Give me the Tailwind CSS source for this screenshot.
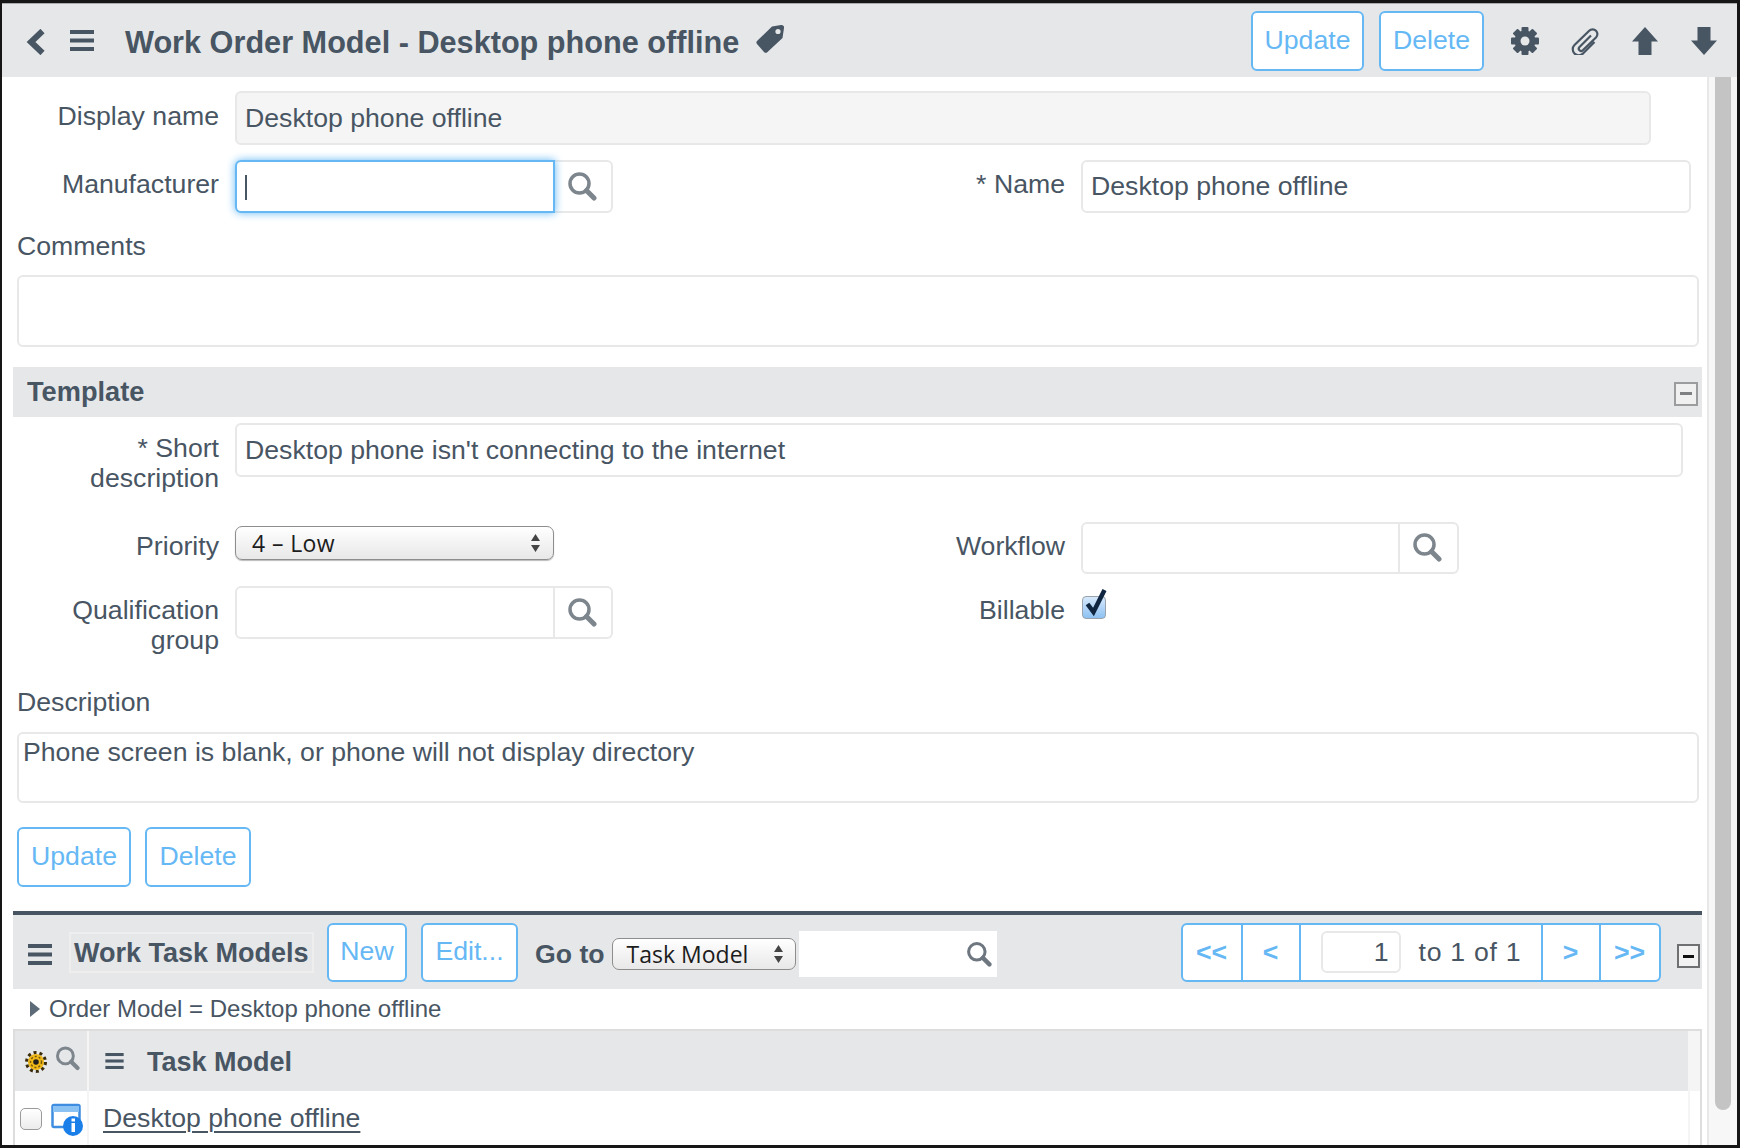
<!DOCTYPE html>
<html lang="en">
  <head>
    <meta charset="UTF-8" />
    <title>Work Order Model - Desktop phone offline</title>
    <script src="https://cdn.jsdelivr.net/npm/@tailwindcss/browser@4"></script>
  </head>
  <body class="bg-[#161616]">
    <svg class="hidden">
      <symbol id="search" viewBox="0 0 30 30">
        <circle cx="12.5" cy="12.5" r="9.5" fill="none" stroke="currentColor" stroke-width="3.5" />
        <path d="M19.5 19.5L27 27" fill="none" stroke="currentColor" stroke-width="5" stroke-linecap="round" />
      </symbol>
      <symbol id="menu" viewBox="0 0 24 21">
        <rect width="24" height="4" />
        <rect y="8.5" width="24" height="4" />
        <rect y="17" width="24" height="4" />
      </symbol>
    </svg>

    <div class="w-[1740px] h-[1148px] overflow-hidden pt-[3px] pl-[2px] pr-[3px] pb-[3px] font-['Liberation_Sans',Arial,sans-serif] text-[26.67px] leading-[30px] text-[#485563]">
      <div class="w-full h-full bg-white flex flex-col">
        <!-- Title bar -->
        <header class="h-[74px] shrink-0 bg-[#e6e7e9] border-t border-[#a9abad] flex items-center pl-[24px] pr-[20px]">
          <svg class="w-[20px] h-[26px] mt-[3px]" viewBox="0 0 20 26"><path d="M16.5 2L5 13l11.5 11" fill="none" stroke="#485563" stroke-width="6" /></svg>
          <svg class="w-[24px] h-[21px] ml-[24px] fill-[#485563]"><use href="#menu" /></svg>
          <h1 class="ml-[31px] mt-[3px] text-[30.67px] font-bold">Work Order Model - Desktop phone offline</h1>
          <svg class="w-[30px] h-[30px] ml-[16px] mb-[3px]" viewBox="0 0 30 30">
            <path d="M17 2.5L26 1a2.5 2.5 0 0 1 3 3L27.5 14 12.5 28a2.5 2.5 0 0 1-3.5 0L2 20a2.5 2.5 0 0 1 .5-3.5z" fill="#485563" />
            <circle cx="23" cy="7.5" r="2.6" fill="#e6e7e9" />
          </svg>
          <button class="ml-auto w-[113px] h-[60px] mt-[1px] pb-[2px] bg-white border-2 border-[#66b8f5] rounded-[6px] text-[#66b8f5]">Update</button>
          <button class="ml-[15px] w-[105px] h-[60px] mt-[1px] pb-[2px] bg-white border-2 border-[#66b8f5] rounded-[6px] text-[#66b8f5]">Delete</button>
          <svg class="w-[28px] h-[28px] ml-[27px]" viewBox="0 0 28 28" fill="#485563">
            <circle cx="14" cy="14" r="10.5" />
            <rect x="10.5" y="0" width="7" height="28" rx="1" />
            <rect x="10.5" y="0" width="7" height="28" rx="1" transform="rotate(45 14 14)" />
            <rect x="10.5" y="0" width="7" height="28" rx="1" transform="rotate(90 14 14)" />
            <rect x="10.5" y="0" width="7" height="28" rx="1" transform="rotate(135 14 14)" />
            <circle cx="14" cy="14" r="4.5" fill="#e6e7e9" />
          </svg>
          <svg class="w-[30px] h-[28px] ml-[31px]" viewBox="0 0 30 28">
            <path d="M21 8.5L9.5 20a2.3 2.3 0 0 0 3.3 3.3L26 10.5a4.8 4.8 0 0 0-6.8-6.8L4.5 18a6 6 0 0 0 8.5 8.5L24.5 15" fill="none" stroke="#485563" stroke-width="2.2" />
          </svg>
          <svg class="w-[26px] h-[28px] ml-[32px]" viewBox="0 0 26 28"><path d="M13 0L26 14.5H19.5V28H6.5V14.5H0z" fill="#485563" /></svg>
          <svg class="w-[26px] h-[28px] ml-[33px]" viewBox="0 0 26 28"><path d="M13 28L26 13.5H19.5V0H6.5V13.5H0z" fill="#485563" /></svg>
        </header>

        <div class="flex flex-1 min-h-0">
          <main class="w-[1705px] shrink-0 overflow-hidden">
            <!-- Display name -->
            <div class="flex mt-[14px]">
              <label class="w-[217px] text-right pt-[10px]">Display name</label>
              <input class="ml-[16px] w-[1416px] h-[54px] px-[8px] bg-[#f5f5f5] border-2 border-[#e8e8e8] rounded-[6px]" value="Desktop phone offline" readonly />
            </div>

            <!-- Manufacturer / Name -->
            <div class="flex mt-[15px]">
              <div class="flex w-[847px]">
                <label class="w-[217px] text-right pt-[9px]">Manufacturer</label>
                <div class="ml-[16px] flex h-[53px]">
                  <div class="relative z-10 w-[320px] bg-white border-2 border-[#66b8f5] rounded-l-[6px] shadow-[0_0_8px_#66b8f5]">
                    <span class="absolute left-[8px] top-[13px] w-[2px] h-[25px] bg-[#485563]"></span>
                  </div>
                  <div class="w-[58px] flex items-center justify-center border-2 border-l-0 border-[#e8e8e8] rounded-r-[6px] text-[#7d858d]">
                    <svg class="w-[30px] h-[30px] mr-[2px] mb-[2px] fill-current"><use href="#search" /></svg>
                  </div>
                </div>
              </div>
              <label class="w-[216px] text-right pt-[9px]">* Name</label>
              <input class="ml-[16px] w-[610px] h-[53px] px-[8px] border-2 border-[#e8e8e8] rounded-[6px]" value="Desktop phone offline" readonly />
            </div>

            <!-- Comments -->
            <div class="ml-[15px] mt-[18px]">Comments</div>
            <div class="ml-[15px] mt-[14px] w-[1682px] h-[72px] border-2 border-[#e8e8e8] rounded-[6px]"></div>

            <!-- Template section -->
            <div class="ml-[11px] mt-[20px] w-[1689px] h-[50px] bg-[#e6e7e9] flex items-center pl-[14px] pr-[4px]">
              <span class="font-bold text-[27.2px]">Template</span>
              <span class="ml-auto mt-[3px] w-[24px] h-[24px] border-2 border-[#9b9c9e] bg-[#f0f0f0] flex items-center justify-center">
                <span class="w-[12px] h-[3px] bg-[#7f8082]"></span>
              </span>
            </div>

            <div class="flex mt-[6px]">
              <label class="w-[217px] text-right pt-[10px]">* Short<br />description</label>
              <input class="ml-[16px] w-[1448px] h-[54px] px-[8px] border-2 border-[#e8e8e8] rounded-[6px]" value="Desktop phone isn't connecting to the internet" readonly />
            </div>

            <!-- Priority / Workflow -->
            <div class="flex mt-[29px]">
              <div class="flex w-[847px]">
                <label class="w-[217px] text-right pt-[9px]">Priority</label>
                <div class="ml-[16px] mt-[4px] w-[319px] h-[34px] pl-[16px] pr-[12px] flex items-center justify-between border border-[#8d8d8d] rounded-[7px] bg-gradient-to-b from-white to-[#e8e8e8] shadow-[0_1px_1px_#bbb] font-['Open_Sans',sans-serif] text-[23px] tracking-[0.4px] text-[#1c1c1c]">
                  <span>4 – Low</span>
                  <svg class="w-[11px] h-[18px]" viewBox="0 0 11 18" fill="#444"><path d="M5.5 0L10 7H1zM5.5 18L1 11h9z" /></svg>
                </div>
              </div>
              <label class="w-[216px] text-right pt-[9px]">Workflow</label>
              <div class="ml-[16px] flex w-[378px] h-[52px] border-2 border-[#e8e8e8] rounded-[6px]">
                <div class="w-[317px] border-r-2 border-[#e8e8e8]"></div>
                <div class="flex-1 flex items-center justify-center text-[#7d858d]">
                  <svg class="w-[30px] h-[30px] mr-[4px] mb-[2px] fill-current"><use href="#search" /></svg>
                </div>
              </div>
            </div>

            <!-- Qualification group / Billable -->
            <div class="flex mt-[12px]">
              <div class="flex w-[847px]">
                <label class="w-[217px] text-right pt-[9px]">Qualification<br />group</label>
                <div class="ml-[16px] flex w-[378px] h-[53px] border-2 border-[#e8e8e8] rounded-[6px]">
                  <div class="w-[318px] border-r-2 border-[#e8e8e8]"></div>
                  <div class="flex-1 flex items-center justify-center text-[#7d858d]">
                    <svg class="w-[30px] h-[30px] mr-[2px] mb-[2px] fill-current"><use href="#search" /></svg>
                  </div>
                </div>
              </div>
              <label class="w-[216px] text-right pt-[9px]">Billable</label>
              <div class="relative ml-[17px] mt-[10px] w-[24px] h-[23px] border border-[#9aa3ad] rounded-[4px] bg-gradient-to-b from-[#d7e9fb] to-[#8dc1f2]">
                <svg class="absolute left-[1px] top-[-10px] w-[24px] h-[30px]" viewBox="0 0 24 30"><path d="M3.5 17l6 8L20.5 3" fill="none" stroke="#0f2540" stroke-width="4.5" /></svg>
              </div>
            </div>

            <!-- Description -->
            <div class="ml-[15px] mt-[32px]">Description</div>
            <div class="ml-[15px] mt-[15px] w-[1682px] h-[71px] px-[4px] pt-[3px] border-2 border-[#e8e8e8] rounded-[6px]">Phone screen is blank, or phone will not display directory</div>

            <div class="ml-[15px] mt-[24px] flex gap-[14px]">
              <button class="w-[114px] h-[60px] pb-[3px] border-2 border-[#66b8f5] rounded-[6px] text-[#66b8f5]">Update</button>
              <button class="w-[106px] h-[60px] pb-[3px] border-2 border-[#66b8f5] rounded-[6px] text-[#66b8f5]">Delete</button>
            </div>

            <!-- Related list -->
            <div class="ml-[11px] mt-[24px] w-[1689px]">
              <div class="h-[78px] border-t-4 border-[#485563] bg-[#e6e7e9] flex items-center relative">
                <svg class="w-[24px] h-[21px] ml-[15px] mt-[4px] fill-[#485563]"><use href="#menu" /></svg>
                <span class="ml-[17px] w-[245px] h-[41px] mt-[1px] pl-[3px] border-2 border-[#eeeeef] font-bold text-[27px] leading-[38px] whitespace-nowrap">Work Task Models</span>
                <button class="ml-[13px] w-[80px] h-[59px] pb-[2px] bg-white border-2 border-[#66b8f5] rounded-[6px] text-[#66b8f5]">New</button>
                <button class="ml-[14px] w-[97px] h-[59px] pb-[2px] bg-white border-2 border-[#66b8f5] rounded-[6px] text-[#66b8f5]">Edit...</button>
                <span class="ml-[17px] mt-[3px] font-bold">Go to</span>
                <div class="ml-[7px] mt-[3px] w-[184px] h-[32px] pl-[14px] pr-[11px] flex items-center justify-between border border-[#8d8d8d] rounded-[7px] bg-gradient-to-b from-white to-[#e8e8e8] font-['Open_Sans',sans-serif] text-[23px] text-[#1c1c1c]">
                  <span>Task Model</span>
                  <svg class="w-[11px] h-[18px]" viewBox="0 0 11 18" fill="#444"><path d="M5.5 0L10 7H1zM5.5 18L1 11h9z" /></svg>
                </div>
                <div class="ml-[3px] mt-[3px] w-[198px] h-[46px] bg-white flex items-center justify-end pr-[5px] text-[#6e7780]">
                  <svg class="w-[26px] h-[26px] fill-current"><use href="#search" /></svg>
                </div>
                <div class="ml-[184px] w-[480px] h-[59px] bg-white border-2 border-[#66b8f5] rounded-[6px] flex items-center text-[#66b8f5] font-bold">
                  <span class="w-[60px] h-full flex items-center justify-center border-r-2 border-[#66b8f5]">&lt;&lt;</span>
                  <span class="w-[58px] h-full flex items-center justify-center border-r-2 border-[#66b8f5]">&lt;</span>
                  <div class="w-[242px] h-full flex items-center border-r-2 border-[#66b8f5] text-[#485563] font-normal">
                    <input class="ml-[20px] w-[80px] h-[42px] px-[10px] text-right border-2 border-[#e8e8e8] rounded-[6px]" value="1" readonly />
                    <span class="ml-[18px] tracking-[0.7px]">to 1 of 1</span>
                  </div>
                  <span class="w-[58px] h-full flex items-center justify-center border-r-2 border-[#66b8f5]">&gt;</span>
                  <span class="flex-1 h-full flex items-center justify-center">&gt;&gt;</span>
                </div>
                <span class="ml-[16px] mt-[8px] w-[23px] h-[24px] border-2 border-[#6f7071] bg-[#f2f2f2] flex items-center justify-center">
                  <span class="w-[11px] h-[3px] bg-[#111]"></span>
                </span>
              </div>

              <div class="h-[40px] flex items-center text-[24px]">
                <svg class="ml-[17px] w-[10px] h-[16px]" viewBox="0 0 10 16"><path d="M0 0L10 8L0 16z" fill="#5d6b78" /></svg>
                <span class="ml-[9px]">Order Model = Desktop phone offline</span>
              </div>

              <div class="border-t-2 border-l-2 border-r-2 border-[#dddddd]">
                <div class="flex h-[60px] bg-[#e6e7e9]">
                  <div class="w-[72px] flex items-start pl-[10px] pt-[14px]">
                    <svg class="w-[22px] h-[24px] mt-[5px]" viewBox="0 0 22 22">
                      <circle cx="11" cy="11" r="8" fill="#f0b917" />
                      <circle cx="11" cy="11" r="9.5" fill="none" stroke="#3a2c0a" stroke-width="3" stroke-dasharray="3 3" />
                      <circle cx="11" cy="11" r="5.5" fill="none" stroke="#7a5a0c" stroke-width="1.5" stroke-dasharray="2 2" />
                      <circle cx="11" cy="11" r="2.8" fill="#1f1f1f" />
                    </svg>
                    <svg class="w-[25px] h-[26px] ml-[8px] text-[#7d858d] fill-current"><use href="#search" /></svg>
                  </div>
                  <div class="w-[2px] bg-[#f5f5f5]"></div>
                  <div class="flex-1 flex items-center pl-[16px]">
                    <svg class="w-[19px] h-[16px] fill-[#485563]"><use href="#menu" /></svg>
                    <span class="ml-[23px] mt-[1px] font-bold text-[27px]">Task Model</span>
                  </div>
                  <div class="w-[12px] bg-[#f5f5f5]"></div>
                </div>
                <div class="flex h-[60px]">
                  <div class="w-[72px] flex items-start pl-[5px] pt-[12px]">
                    <input type="checkbox" class="appearance-none w-[22px] h-[22px] mt-[5px] border border-[#9a9a9a] rounded-[5px] bg-gradient-to-b from-white to-[#ececec]" />
                    <svg class="w-[33px] h-[34px] ml-[9px]" viewBox="0 0 33 34">
                      <rect x="1.5" y="2" width="27" height="22" rx="1.5" fill="#fff" stroke="#3f8de0" stroke-width="2.5" />
                      <rect x="2" y="3" width="26" height="6" fill="#8ac2f4" />
                      <circle cx="22" cy="23" r="10" fill="#1a7fe8" />
                      <rect x="20.5" y="15.5" width="3.5" height="3" fill="#fff" />
                      <rect x="20.5" y="20" width="3.5" height="9" fill="#fff" />
                    </svg>
                  </div>
                  <div class="w-[2px] bg-[#f5f5f5]"></div>
                  <div class="flex-1 pl-[14px] pt-[12px]"><a href="#" class="underline decoration-2 underline-offset-[4px]">Desktop phone offline</a></div>
                  <div class="w-[12px] border-l-2 border-[#f5f5f5]"></div>
                </div>
              </div>
            </div>
          </main>

          <!-- Scrollbar -->
          <div class="flex-1 border-l-2 border-[#e8e8e8] bg-[#f7f7f7] pl-[6px] pr-[6px]">
            <div class="h-[1033px] bg-[#c4c4c4] rounded-b-[8px]"></div>
          </div>
        </div>
      </div>
    </div>
  </body>
</html>
